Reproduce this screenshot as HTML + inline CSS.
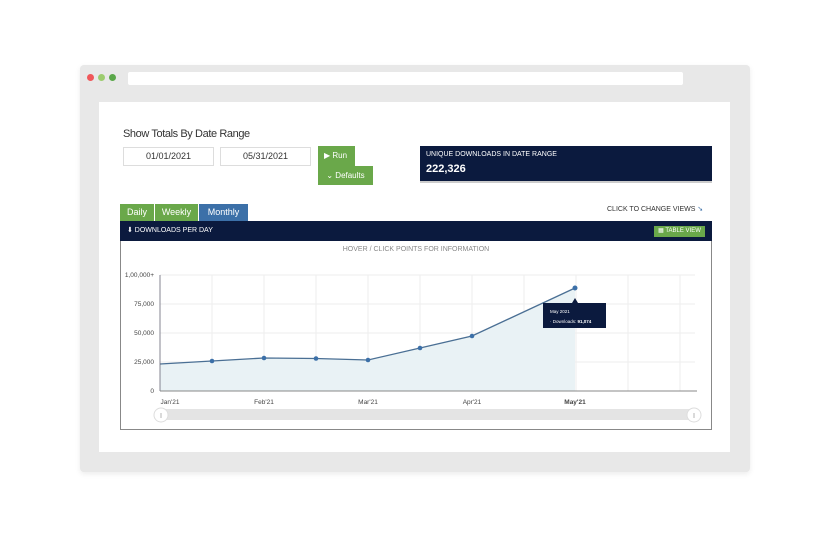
<!DOCTYPE html>
<html><head><style>
*{margin:0;padding:0;box-sizing:border-box}
body{width:830px;height:539px;background:#fff;font-family:"Liberation Sans",sans-serif;position:relative;overflow:hidden}
.a{position:absolute}
</style></head><body>
<div class="a" style="left:80px;top:65px;width:670px;height:407px;background:#e8e8e8;border-radius:4px;box-shadow:0 2px 6px rgba(0,0,0,.08)"></div>
<div class="a" style="left:87px;top:74px;width:7px;height:7px;border-radius:50%;background:#f0575a"></div>
<div class="a" style="left:98px;top:74px;width:7px;height:7px;border-radius:50%;background:#9ccc6f"></div>
<div class="a" style="left:109px;top:74px;width:7px;height:7px;border-radius:50%;background:#5aa74a"></div>
<div class="a" style="left:128px;top:72px;width:555px;height:13px;background:#fff;border-radius:2px"></div>
<div class="a" style="left:99px;top:102px;width:631px;height:350px;background:#fff"></div>

<div class="a" style="left:123px;top:128px;font-size:11px;color:#333;letter-spacing:-0.4px">Show Totals By Date Range</div>
<div class="a" style="left:123px;top:147px;width:91px;height:19px;border:1px solid #ddd;font-size:9px;text-align:center;line-height:17px;color:#333">01/01/2021</div>
<div class="a" style="left:220px;top:147px;width:91px;height:19px;border:1px solid #ddd;font-size:9px;text-align:center;line-height:17px;color:#333">05/31/2021</div>
<div class="a" style="left:318px;top:146px;width:37px;height:20px;background:#6aa84a;color:#fff;font-size:8px;line-height:20px;padding-left:6px">▶ Run</div>
<div class="a" style="left:318px;top:166px;width:55px;height:19px;background:#6aa84a;color:#fff;font-size:8px;line-height:19px;text-align:center">⌄ Defaults</div>
<div class="a" style="left:420px;top:146px;width:292px;height:37px;background:#0b1a3e;border-bottom:2px solid #ccc;color:#fff">
<div style="font-size:7px;position:absolute;left:6px;top:5px">UNIQUE DOWNLOADS IN DATE RANGE</div>
<div style="font-size:11px;font-weight:bold;position:absolute;left:6px;top:17px">222,326</div></div>

<div class="a" style="left:120px;top:204px;width:34px;height:17px;background:#6aa84a;color:#fff;font-size:9px;line-height:17px;text-align:center">Daily</div>
<div class="a" style="left:155px;top:204px;width:43px;height:17px;background:#6aa84a;color:#fff;font-size:9px;line-height:17px;text-align:center">Weekly</div>
<div class="a" style="left:199px;top:204px;width:49px;height:17px;background:#3c70a8;color:#fff;font-size:9px;line-height:17px;text-align:center">Monthly</div>
<div class="a" style="left:607px;top:205px;font-size:7px;color:#333">CLICK TO CHANGE VIEWS <span style="color:#3c70a8">➘</span></div>

<div class="a" style="left:120px;top:221px;width:592px;height:209px;border:1px solid #888;border-top:none"></div>
<div class="a" style="left:120px;top:221px;width:592px;height:20px;background:#0b1a3e;color:#fff;font-size:7px;line-height:20px;padding-left:7px">⬇ DOWNLOADS PER DAY</div>
<div class="a" style="left:654px;top:226px;width:51px;height:11px;background:#6aa84a;color:#fff;font-size:6px;line-height:11px;text-align:center">▦ TABLE VIEW</div>
<div class="a" style="left:120px;top:246px;width:592px;text-align:center;font-size:7px;color:#888">HOVER / CLICK POINTS FOR INFORMATION</div>

<svg class="a" style="left:0;top:0" width="830" height="539" font-family="Liberation Sans" font-size="6.5" fill="#444">
<g stroke="#eee" stroke-width="1">
<line x1="160" y1="275" x2="695" y2="275"/><line x1="160" y1="304" x2="695" y2="304"/><line x1="160" y1="333" x2="695" y2="333"/><line x1="160" y1="362" x2="695" y2="362"/>
<line x1="212" y1="275" x2="212" y2="391"/><line x1="264" y1="275" x2="264" y2="391"/><line x1="316" y1="275" x2="316" y2="391"/><line x1="368" y1="275" x2="368" y2="391"/><line x1="420" y1="275" x2="420" y2="391"/><line x1="472" y1="275" x2="472" y2="391"/><line x1="524" y1="275" x2="524" y2="391"/><line x1="576" y1="275" x2="576" y2="391"/><line x1="628" y1="275" x2="628" y2="391"/><line x1="680" y1="275" x2="680" y2="391"/>
</g>
<polygon points="160,364 212,361 264,358 316,358.5 368,360 420,348 472,336 575,288 575,391 160,391" fill="#e9f2f5"/>
<polyline points="160,364 212,361 264,358 316,358.5 368,360 420,348 472,336 575,288" fill="none" stroke="#4a6f94" stroke-width="1.3"/>
<g fill="#3c70a8"><circle cx="212" cy="361" r="2.3"/><circle cx="264" cy="358" r="2.3"/><circle cx="316" cy="358.5" r="2.3"/><circle cx="368" cy="360" r="2.3"/><circle cx="420" cy="348" r="2.3"/><circle cx="472" cy="336" r="2.3"/><circle cx="575" cy="288" r="2.5"/></g>
<line x1="160" y1="275" x2="160" y2="391" stroke="#667" stroke-width="0.8"/>
<line x1="160" y1="391" x2="697" y2="391" stroke="#888" stroke-width="1"/>
<text x="154" y="277" text-anchor="end">1,00,000+</text><text x="154" y="306" text-anchor="end">75,000</text><text x="154" y="335" text-anchor="end">50,000</text><text x="154" y="364" text-anchor="end">25,000</text><text x="154" y="393" text-anchor="end">0</text>
<text x="170" y="404" text-anchor="middle">Jan'21</text><text x="264" y="404" text-anchor="middle">Feb'21</text><text x="368" y="404" text-anchor="middle">Mar'21</text><text x="472" y="404" text-anchor="middle">Apr'21</text><text x="575" y="404" text-anchor="middle" font-weight="bold">May'21</text>
<polygon points="575,298 578,303 572,303" fill="#0b1a3e"/>
<rect x="543" y="303" width="63" height="25" fill="#0b1a3e"/>
<text x="550" y="313" fill="#fff" font-size="4.5">May 2021</text>
<text x="550" y="323" fill="#fff" font-size="4.5">· Downloads: <tspan font-weight="bold">91,074</tspan></text>
<rect x="160" y="409" width="535" height="11" rx="5" fill="#e4e4e4"/>
<circle cx="161" cy="415" r="7" fill="#fff" stroke="#ddd"/><circle cx="694" cy="415" r="7" fill="#fff" stroke="#ddd"/>
<text x="161" y="417" text-anchor="middle" fill="#aaa" font-size="5">||</text><text x="694" y="417" text-anchor="middle" fill="#aaa" font-size="5">||</text>
</svg>
</body></html>
